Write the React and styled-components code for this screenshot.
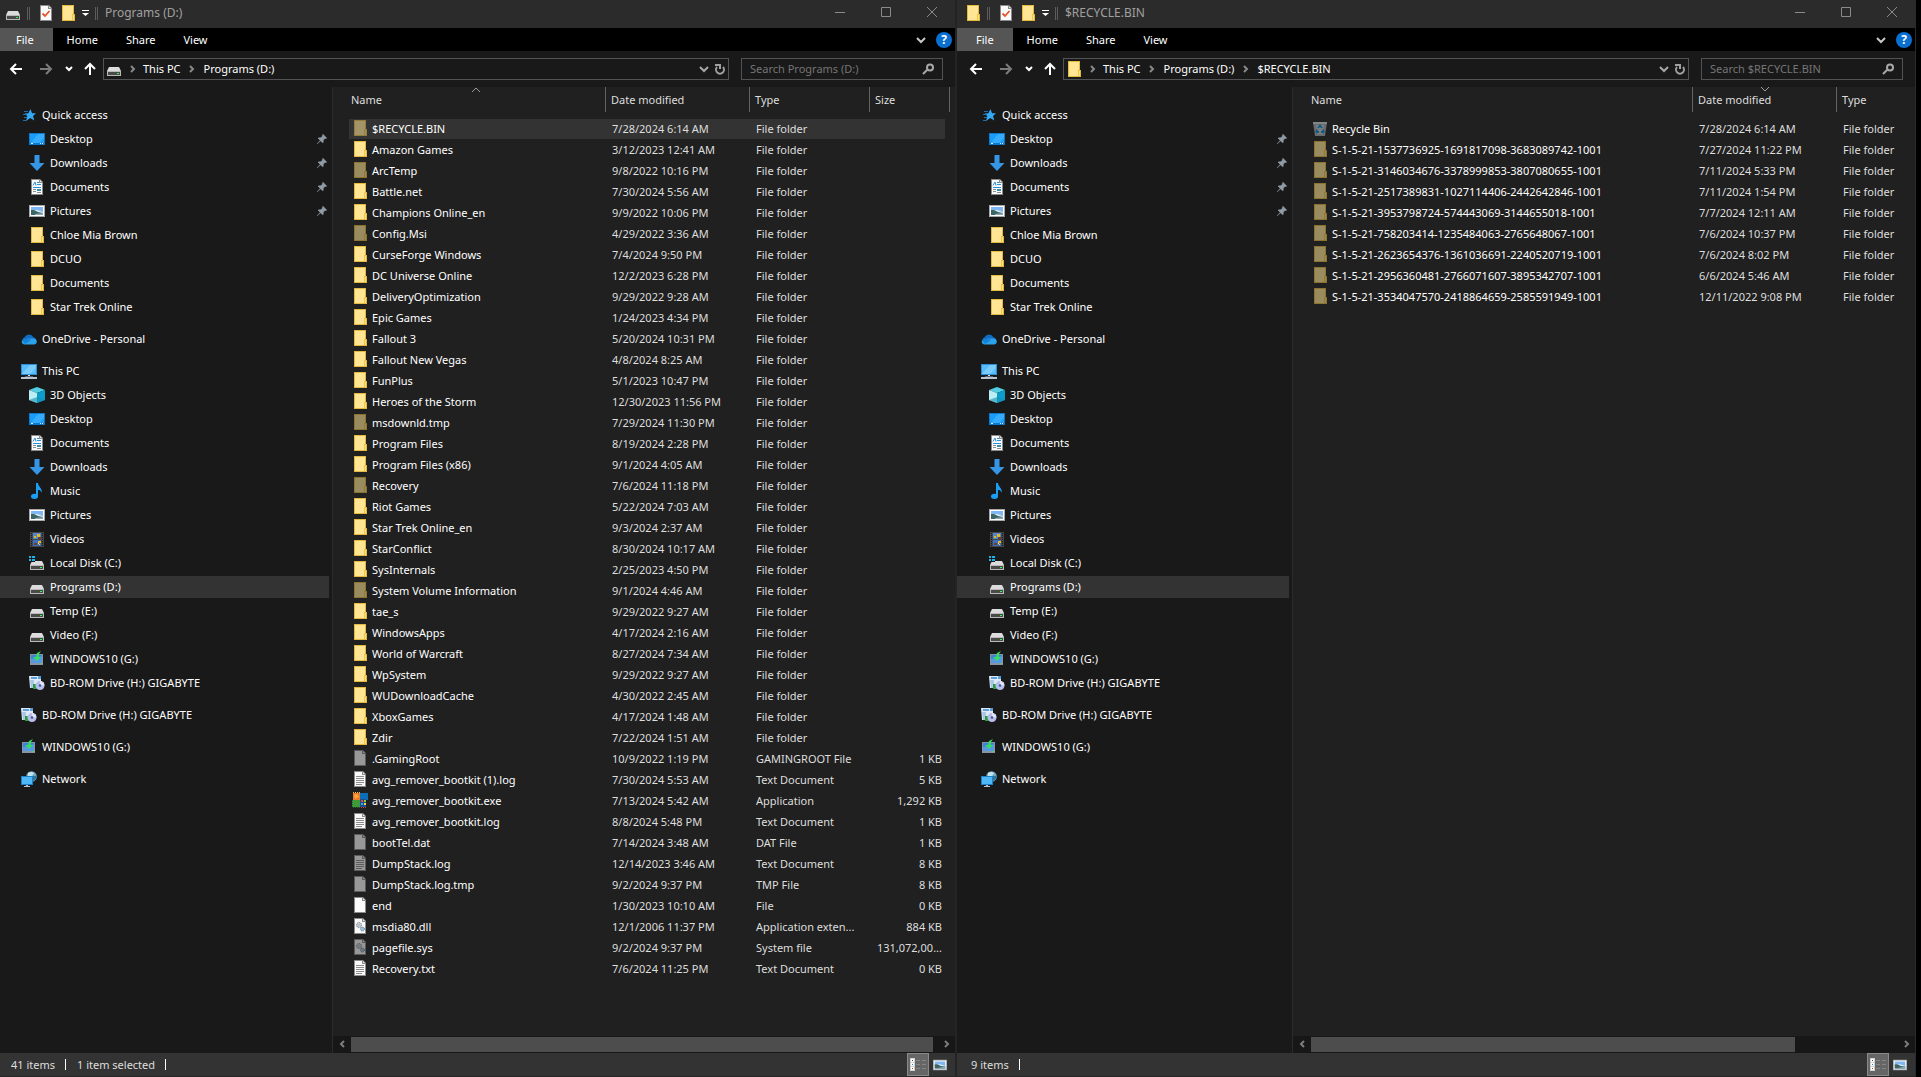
import React from "react";
import styled, { createGlobalStyle, css } from "styled-components";

const GlobalStyle = createGlobalStyle`
  * {
    box-sizing: border-box;
  }
  body {
    margin: 0;
    background: #000;
    color: #fff;
    font-family: "Noto Sans", "Open Sans", sans-serif;
    font-size: 11px;
    line-height: 16px;
    overflow: hidden;
  }
  button, input {
    font: inherit;
    color: inherit;
    border: 0;
    padding: 0;
    background: none;
  }
`;

/* ---------- icons ---------- */

const Svg = styled.svg`
  display: block;
  flex: none;
  opacity: ${props => (props.$dim ? 0.55 : 1)};
`;

const Pic = ({ children, size = 16, dim }) => (
  <Svg width={size} height={size} viewBox="0 0 16 16" $dim={dim} aria-hidden="true">
    {children}
  </Svg>
);

const page = (
  <>
    <path d="M2 0H11L14 3V16H2Z" fill="#8b8b8b" />
    <path d="M3 1H10V4H13V15H3Z" fill="#fafafa" />
    <path d="M11 1V3H13Z" fill="#e2e2e2" />
  </>
);

const drive = (
  <>
    <path d="M3 6H13L15 10H1Z" fill="#dcdcdc" />
    <path d="M1 10H15V15H1Z" fill="#b9b9b9" />
    <path d="M2 11H14V14H2Z" fill="#4a4a4a" />
    <path d="M11 12H13V13H11Z" fill="#2bff3c" />
  </>
);

const picture = (
  <>
    <path d="M0 2H16V14H0Z" fill="#a8a8a8" />
    <path d="M1 3H15V13H1Z" fill="#fff" />
    <path d="M2 4H14V12H2Z" fill="#7fb7f2" />
    <path d="M2 7H8L14 9V10H2Z" fill="#dcecf7" />
    <path d="M2 7L5 7L9 9L14 10V12H2Z" fill="#3d6663" />
    <path d="M6 11L14 10V12H6Z" fill="#86a9b5" />
  </>
);

const gears = (
  <>
    <circle cx="7" cy="7" r="2.6" fill="#c9d2d9" stroke="#777f86" strokeDasharray="1.2 .8" />
    <circle cx="7" cy="7" r="1" fill="#fff" stroke="#8b9298" strokeWidth=".6" />
    <circle cx="10.5" cy="11" r="2" fill="#9dc1da" stroke="#54758d" strokeDasharray="1 .7" />
  </>
);

const shapes = {
  folder: (
    <>
      <path d="M2 0H14V9H15V16H2Z" fill="#e3b93e" />
      <path d="M3 1H13V15H3Z" fill="#ffe594" />
      <path d="M12 10H14V15H12Z" fill="#ffe080" />
      <path d="M12 9H13V15H12Z" fill="#edc650" />
    </>
  ),
  blank: page,
  text: (
    <>
      {page}
      <path d="M4 5.5H12M4 7.5H12M4 9.5H12M4 11.5H12M4 13.5H10" stroke="#8c8c8c" />
    </>
  ),
  dll: (
    <>
      {page}
      {gears}
    </>
  ),
  exe: (
    <>
      <path d="M1 1H8V8H1Z" fill="#ee7a2b" />
      <path d="M8 1H16V8H8Z" fill="#0b6fb8" />
      <path d="M0 8H8V15H0Z" fill="#3f9b3a" />
      <path d="M8 7H14V15H8Z" fill="#1c4e93" />
      <path d="M1 .5H8" stroke="#f3c14a" strokeDasharray="1 1" />
      <path d="M.5 8V16M1 15.5H8" stroke="#1e6f36" strokeDasharray="1 1" />
      <path d="M2 3L5 2L7 5L3 7Z" fill="#f9a83c" />
      <path d="M9 8H11V10H9Z" fill="#e6452c" />
      <path d="M12 8H14V10H12Z" fill="#7ac943" />
      <path d="M9 11H11V13H9Z" fill="#3aa0e8" />
      <path d="M12 11H14V13H12Z" fill="#ffd23a" />
      <path d="M9 15.5H14" stroke="#d1402e" strokeDasharray="1 1" />
    </>
  ),
  bin: (
    <>
      <path d="M1 2H15L13 16H3Z" fill="#a3abaf" />
      <path d="M1 2H15V4H1Z" fill="#d5dadd" />
      <path d="M4 5H12L11 14H5Z" fill="#c3ccd1" />
      <path
        d="M6 8L8 5.500L10 8M5 9.500L4.500 12H7M11 9.500L11.500 12H9"
        fill="none"
        stroke="#0a86d6"
        strokeWidth="1.800"
      />
    </>
  ),
  check: (
    <>
      {page}
      <path d="M4.500 8.500L7 11L11.500 6" fill="none" stroke="#e8532a" strokeWidth="1.800" />
    </>
  ),
  drive,
  windrive: (
    <>
      {drive}
      <path d="M0 0H6V7H0Z" fill="#191919" />
      <path d="M0 1H2V3H0ZM3 1H6V3H3ZM0 4H2V6H0ZM3 4H6V6H3Z" fill="#1cb4e8" />
    </>
  ),
  star: (
    <>
      <path
        d="M9.500 2L11 6.200H15L12 9L13.300 13.500L9.300 11L5 14L6.300 9.300L3.500 6.600L7.400 6.200Z"
        fill="#35a9f5"
      />
      <path d="M3 4.500H7M2 7.500H6M3 10.500H6M2 13.500H5" stroke="#1c6fae" />
    </>
  ),
  desktop: (
    <>
      <path d="M0 2H16V14H0Z" fill="#0b78d0" />
      <path d="M1 3H15V12H1Z" fill="#1a9dfa" />
      <path d="M9 3H15V7L10 12H2Z" fill="#35acff" />
      <path d="M2 12.500H4M11 12.500H12M13 12.500H14" stroke="#d6efff" />
    </>
  ),
  download: <path d="M5.500 0H10.500V8H15.500L8 16L.5 8H5.500Z" fill="#3596e6" />,
  document: (
    <>
      {page}
      <path d="M4 6.500L6 3L7 6.500M8 3.500H10M8 5.500H12M4 8.500H12" fill="none" stroke="#2a8fe0" />
      <path d="M4 10.500H7M4 12.500H7M8 13.500H12" stroke="#8a8a8a" />
      <path d="M8 10H12V12H8Z" fill="#3a8fa5" />
    </>
  ),
  picture,
  cloud: (
    <>
      <path d="M4 13A3.500 3.500 0 0 1 3.500 6.300A5 5 0 0 1 12.500 6.300A3.500 3.500 0 0 1 13 13Z" fill="#0f6cc0" />
      <path d="M3 13.400A3 3 0 0 1 1 9.500L7 7.500L12.500 7.500A3 3 0 0 1 13.500 13.400Z" fill="#2ba2ea" />
      <path d="M1 9.300L7 7L10 9L4 13Z" fill="#1683d8" />
    </>
  ),
  pc: (
    <>
      <path d="M0 1H16V12H0Z" fill="#2d8fd5" />
      <path d="M1 2H15V11H1Z" fill="#57bcfb" />
      <path d="M9 2H15V5L9 11H1Z" fill="#7accff" />
      <path d="M7 12H9V13H7Z" fill="#dfe6ee" />
      <path d="M4 13H12V14H4Z" fill="#55606c" />
      <path d="M0 14H16V16H0Z" fill="#bcc4d4" />
    </>
  ),
  cube: (
    <>
      <path d="M8 0L16 3L8 6L0 3Z" fill="#53cfe3" />
      <path d="M0 3L8 6V16L0 13Z" fill="#bdeef3" />
      <path d="M8 6L16 3V13L8 16Z" fill="#0b9ccb" />
      <path d="M0 13L8 10L16 13L8 16Z" fill="#1590b6" opacity=".6" />
    </>
  ),
  music: (
    <>
      <path d="M7 0H9C9 4 14 5 12.500 10C12 7.500 10.500 7 9 7V13H7Z" fill="#1a9ff5" />
      <ellipse cx="5.500" cy="13.300" rx="3.500" ry="2.600" fill="#1a9ff5" />
    </>
  ),
  video: (
    <>
      <path d="M1 1H15V16H1Z" fill="#474747" />
      <path d="M2.500 2V15M13.500 2V15" stroke="#191919" strokeDasharray="1 1" />
      <path d="M4 2H12V8H4Z" fill="#4c86cf" />
      <path d="M4 9H12V15H4Z" fill="#3a6fc0" />
      <path d="M8 3H11V6H8ZM5 5H7V7H5ZM9 10H12V12H9Z" fill="#e6b32c" />
      <path d="M9 6H12V8H9ZM5 12H8V14H5Z" fill="#6b3f2f" />
      <path d="M9 12L11 14" stroke="#f2d25b" />
    </>
  ),
  usb: (
    <>
      <path d="M1 3H14V14H1Z" fill="#8a93a0" />
      <path d="M2 4H13V12H2Z" fill="#3c83d6" />
      <path d="M2 8L13 5V12H2Z" fill="#5499e2" />
      <path d="M12 12H13V13H12Z" fill="#3dff4f" />
      <path d="M12 0L8 2L7 6H4L8 10L12 6H9.500L10 3Z" fill="#35df5b" />
    </>
  ),
  disc: (
    <>
      <path d="M0 1H10L12 3V13H1Z" fill="#dfe9f4" />
      <path d="M2 2H8V4H2ZM9 1H12V4H9Z" fill="#5b9fdc" />
      <path d="M1 5H5V13H2Z" fill="#a9c8e6" />
      <path d="M4 9H7L8 14H4Z" fill="#2e9b43" />
      <circle cx="11" cy="10.500" r="4.500" fill="#b9bdea" />
      <path d="M11 6A4.500 4.500 0 0 1 15.500 10.500H11Z" fill="#e2e4fb" />
      <circle cx="11" cy="10.500" r="1.300" fill="#3e5f9a" />
    </>
  ),
  network: (
    <>
      <circle cx="10.500" cy="5.500" r="5.300" fill="#6fa9c4" />
      <path d="M7 2Q10 0 13 2L11 5L7 6Z" fill="#c4e2ec" />
      <path d="M12 5L15.500 5Q15 9 12 10Z" fill="#2d7496" />
      <path d="M0 5H12V14H0Z" fill="#1d7fc8" />
      <path d="M1 6H11V13H1Z" fill="#4db8f8" />
      <path d="M5 14H7V15H9V16H3V15H5Z" fill="#b9c2cf" />
    </>
  )
};

const Icon = ({ name, dim }) => <Pic dim={dim}>{shapes[name]}</Pic>;

const Stroke = ({ d, w = 12, h = 12, color = "#fff", width = 1 }) => (
  <Svg width={w} height={h} viewBox={`0 0 ${w} ${h}`} aria-hidden="true">
    <path d={d} fill="none" stroke={color} strokeWidth={width} />
  </Svg>
);

const Pin = () => (
  <Svg width="10" height="10" viewBox="0 0 10 10" aria-hidden="true">
    <path d="M6 0L10 4L9 5L8 4.500L6.500 6.500V8.500L5.500 9L3.500 7L.5 10L0 9.500L3 6.500L1 4.500L1.500 3.500H3.500L5.500 2L5 1Z" fill="#8f9aa3" />
  </Svg>
);

/* ---------- window frame ---------- */

const Desktop = styled.div`
  display: grid;
  grid-template-columns: 957fr 959fr;
  height: 100vh;
  padding-right: 5px;
`;

const Frame = styled.section`
  display: flex;
  flex-direction: column;
  min-width: 0;
  background: #191919;
  border-right: ${props => (props.$front ? "1px solid #2b2b2b" : "2px solid #242424")};
  border-bottom: 1px solid #262626;
`;

const edge = css`
  padding-left: ${props => (props.$front ? 3 : 0)}px;
`;

const TitleBar = styled.header`
  ${edge}
  display: flex;
  align-items: flex-start;
  flex: none;
  height: 28px;
  background: #2b2b2b;
  color: #a0a0a0;
`;

const QuickTools = styled.div`
  display: flex;
  align-items: center;
  height: 26px;
  padding-left: 5px;
`;

const Bars = styled.span`
  width: 3px;
  height: 13px;
  margin: 0 ${props => props.$gap}px 0 6px;
  border: solid #5c5c5c;
  border-width: 0 1px;
`;

const ToolButton = styled.button`
  display: flex;
  margin-right: 6px;
`;

const Title = styled.h1`
  margin: 0;
  flex: 1;
  font-size: 12px;
  line-height: 26px;
  font-weight: 400;
`;

const CaptionButton = styled.button`
  display: flex;
  align-items: center;
  justify-content: center;
  width: 46px;
  height: 24px;
`;

const Ribbon = styled.nav`
  display: flex;
  flex: none;
  height: 23px;
  background: #000;
`;

const Tab = styled.button`
  padding: 0 14px;
  ${props =>
    props.$file &&
    css`
      padding: 0 19px 0 ${props.$front ? 19 : 16}px;
      background: #555;
    `}
`;

const RibbonEnd = styled.div`
  display: flex;
  align-items: center;
  gap: 9px;
  margin-left: auto;
  padding-right: 3px;
`;

const Help = styled.button`
  width: 16px;
  height: 16px;
  border-radius: 50%;
  background: #0a6fd0;
  font-size: 12px;
  font-weight: 700;
`;

const AddressRow = styled.div`
  ${edge}
  display: flex;
  align-items: center;
  flex: none;
  height: 36px;
`;

const Arrows = styled.div`
  display: flex;
  align-items: center;
  width: 103px;
  padding-left: 9px;
`;

const ArrowButton = styled.button`
  display: flex;
  margin-right: ${props => props.$gap}px;
`;

const AddressBox = styled.div`
  display: flex;
  align-items: center;
  flex: 1;
  height: 22px;
  margin-right: 12px;
  padding-left: 2px;
  border: 1px solid #535353;
`;

const Crumb = styled.button`
  padding: 0;
`;

const CrumbArrow = styled.span`
  display: flex;
  justify-content: center;
  width: ${props => (props.$first ? 21 : 23)}px;
`;

const Spacer = styled.span`
  flex: 1;
`;

const BoxButton = styled.button`
  display: flex;
  align-items: center;
  justify-content: center;
  width: ${props => props.$w}px;
  height: 20px;
`;

const SearchBox = styled.label`
  display: flex;
  align-items: center;
  width: 202px;
  height: 22px;
  margin-right: 12px;
  padding: 0 8px;
  border: 1px solid #535353;
`;

const SearchInput = styled.input`
  flex: 1;
  min-width: 0;
  outline: 0;
  &::placeholder {
    color: #757575;
    opacity: 1;
  }
`;

const Body = styled.div`
  display: flex;
  flex: 1;
  min-height: 0;
`;

/* ---------- navigation pane ---------- */

const Tree = styled.nav`
  display: flex;
  flex-direction: column;
  flex: none;
  width: ${props => (props.$front ? 336 : 333)}px;
  padding-top: 16px;
  padding-right: 3px;
  border-right: 1px solid #2b2b2b;
`;

const TreeItem = styled.a`
  display: flex;
  align-items: center;
  gap: 5px;
  flex: none;
  height: 22px;
  margin: ${props => (props.$group ? 9 : 1)}px 0 1px;
  padding-left: ${props => (props.$child ? 29 : 21) + (props.$front ? 3 : 0)}px;
  padding-right: 2px;
  color: #fff;
  text-decoration: none;
  background: ${props => (props.$selected ? "#333" : "none")};
`;

/* ---------- file list ---------- */

const FilePane = styled.main`
  display: flex;
  flex-direction: column;
  flex: 1;
  min-width: 0;
  background: #202020;
`;

const Scroller = styled.div`
  flex: 1;
  min-height: 0;
  overflow: hidden;
  padding-left: 12px;
`;

const Table = styled.table`
  width: ${props => props.$w}px;
  table-layout: fixed;
  border-collapse: separate;
  border-spacing: 0;
`;

const HeadCell = styled.th`
  position: relative;
  height: 25px;
  padding: 0 5px;
  border-left: 1px solid ${props => (props.$first ? "transparent" : "#636363")};
  ${props => props.$last && "border-right: 1px solid #636363;"}
  color: #dedede;
  font-weight: 400;
  text-align: left;
`;

const SortMark = styled.span`
  position: absolute;
  top: 0;
  left: 50%;
  margin-left: -4px;
`;

const HeadGap = styled.tr`
  height: 7px;
`;

const Cell = styled.td`
  height: 21px;
  padding: 0 0 0 7px;
  border-bottom: 1px solid transparent;
  background: ${props => (props.$selected ? "#333" : "none")};
  background-clip: padding-box;
  color: #dedede;
  white-space: nowrap;
`;

const NameCell = styled(Cell)`
  padding-left: 3px;
  border-left: 4px solid transparent;
  color: #fff;
`;

const SizeCell = styled(Cell)`
  padding-right: 3px;
  border-right: 5px solid transparent;
  text-align: right;
`;

const FileName = styled.span`
  display: flex;
  align-items: center;
  gap: 4px;
  & > svg {
    margin-bottom: 2px;
  }
`;

const ScrollBar = styled.div`
  display: flex;
  align-items: center;
  flex: none;
  height: 17px;
  padding-bottom: 1px;
  background: #171717;
`;

const Thumb = styled.div`
  flex: ${props => props.$grow} 1 0;
  height: 15px;
  background: ${props => (props.$track ? "#171717" : "#4d4d4d")};
`;

const StatusBar = styled.footer`
  ${edge}
  display: flex;
  align-items: center;
  flex: none;
  height: 23px;
  background: #333;
  color: #dedede;
`;

const StatusText = styled.span`
  display: flex;
  align-items: center;
  padding-left: 11px;
  &::after {
    content: "";
    width: 1px;
    height: 11px;
    margin-left: 10px;
    background: #fff;
  }
`;

const ViewButton = styled.button`
  display: flex;
  align-items: center;
  justify-content: center;
  width: 22px;
  height: 23px;
  border: 1px solid transparent;
  &:last-child {
    margin-right: 4px;
  }
  ${props =>
    props.$on &&
    css`
      background: #666;
      border-color: #8a8a8a;
    `}
`;

/* ---------- data ---------- */

const places = [
  { label: "Quick access", icon: "star" },
  { label: "Desktop", icon: "desktop", child: true, pin: true },
  { label: "Downloads", icon: "download", child: true, pin: true },
  { label: "Documents", icon: "document", child: true, pin: true },
  { label: "Pictures", icon: "picture", child: true, pin: true },
  { label: "Chloe Mia Brown", icon: "folder", child: true },
  { label: "DCUO", icon: "folder", child: true },
  { label: "Documents", icon: "folder", child: true },
  { label: "Star Trek Online", icon: "folder", child: true },
  { label: "OneDrive - Personal", icon: "cloud", group: true },
  { label: "This PC", icon: "pc", group: true },
  { label: "3D Objects", icon: "cube", child: true },
  { label: "Desktop", icon: "desktop", child: true },
  { label: "Documents", icon: "document", child: true },
  { label: "Downloads", icon: "download", child: true },
  { label: "Music", icon: "music", child: true },
  { label: "Pictures", icon: "picture", child: true },
  { label: "Videos", icon: "video", child: true },
  { label: "Local Disk (C:)", icon: "windrive", child: true },
  { label: "Programs (D:)", icon: "drive", child: true, selected: true },
  { label: "Temp (E:)", icon: "drive", child: true },
  { label: "Video (F:)", icon: "drive", child: true },
  { label: "WINDOWS10 (G:)", icon: "usb", child: true },
  { label: "BD-ROM Drive (H:) GIGABYTE", icon: "disc", child: true },
  { label: "BD-ROM Drive (H:) GIGABYTE", icon: "disc", group: true },
  { label: "WINDOWS10 (G:)", icon: "usb", group: true },
  { label: "Network", icon: "network", group: true }
];

// name, date, type, size, icon, hidden
const folder = (name, date, dim) => [name, date, "File folder", "", "folder", dim];

const programs = [
  folder("$RECYCLE.BIN", "7/28/2024 6:14 AM", true),
  folder("Amazon Games", "3/12/2023 12:41 AM"),
  folder("ArcTemp", "9/8/2022 10:16 PM", true),
  folder("Battle.net", "7/30/2024 5:56 AM"),
  folder("Champions Online_en", "9/9/2022 10:06 PM"),
  folder("Config.Msi", "4/29/2022 3:36 AM", true),
  folder("CurseForge Windows", "7/4/2024 9:50 PM"),
  folder("DC Universe Online", "12/2/2023 6:28 PM"),
  folder("DeliveryOptimization", "9/29/2022 9:28 AM"),
  folder("Epic Games", "1/24/2023 4:34 PM"),
  folder("Fallout 3", "5/20/2024 10:31 PM"),
  folder("Fallout New Vegas", "4/8/2024 8:25 AM"),
  folder("FunPlus", "5/1/2023 10:47 PM"),
  folder("Heroes of the Storm", "12/30/2023 11:56 PM"),
  folder("msdownld.tmp", "7/29/2024 11:30 PM", true),
  folder("Program Files", "8/19/2024 2:28 PM"),
  folder("Program Files (x86)", "9/1/2024 4:05 AM"),
  folder("Recovery", "7/6/2024 11:18 PM", true),
  folder("Riot Games", "5/22/2024 7:03 AM"),
  folder("Star Trek Online_en", "9/3/2024 2:37 AM"),
  folder("StarConflict", "8/30/2024 10:17 AM"),
  folder("SysInternals", "2/25/2023 4:50 PM"),
  folder("System Volume Information", "9/1/2024 4:46 AM", true),
  folder("tae_s", "9/29/2022 9:27 AM"),
  folder("WindowsApps", "4/17/2024 2:16 AM"),
  folder("World of Warcraft", "8/27/2024 7:34 AM"),
  folder("WpSystem", "9/29/2022 9:27 AM"),
  folder("WUDownloadCache", "4/30/2022 2:45 AM"),
  folder("XboxGames", "4/17/2024 1:48 AM"),
  folder("Zdir", "7/22/2024 1:51 AM"),
  [".GamingRoot", "10/9/2022 1:19 PM", "GAMINGROOT File", "1 KB", "blank", true],
  ["avg_remover_bootkit (1).log", "7/30/2024 5:53 AM", "Text Document", "5 KB", "text"],
  ["avg_remover_bootkit.exe", "7/13/2024 5:42 AM", "Application", "1,292 KB", "exe"],
  ["avg_remover_bootkit.log", "8/8/2024 5:48 PM", "Text Document", "1 KB", "text"],
  ["bootTel.dat", "7/14/2024 3:48 AM", "DAT File", "1 KB", "blank", true],
  ["DumpStack.log", "12/14/2023 3:46 AM", "Text Document", "8 KB", "text", true],
  ["DumpStack.log.tmp", "9/2/2024 9:37 PM", "TMP File", "8 KB", "blank", true],
  ["end", "1/30/2023 10:10 AM", "File", "0 KB", "blank"],
  ["msdia80.dll", "12/1/2006 11:37 PM", "Application exten...", "884 KB", "dll"],
  ["pagefile.sys", "9/2/2024 9:37 PM", "System file", "131,072,00...", "dll", true],
  ["Recovery.txt", "7/6/2024 11:25 PM", "Text Document", "0 KB", "text"]
];

const recycled = [
  ["Recycle Bin", "7/28/2024 6:14 AM", "File folder", "", "bin", true],
  folder("S-1-5-21-1537736925-1691817098-3683089742-1001", "7/27/2024 11:22 PM", true),
  folder("S-1-5-21-3146034676-3378999853-3807080655-1001", "7/11/2024 5:33 PM", true),
  folder("S-1-5-21-2517389831-1027114406-2442642846-1001", "7/11/2024 1:54 PM", true),
  folder("S-1-5-21-3953798724-574443069-3144655018-1001", "7/7/2024 12:11 AM", true),
  folder("S-1-5-21-758203414-1235484063-2765648067-1001", "7/6/2024 10:37 PM", true),
  folder("S-1-5-21-2623654376-1361036691-2240520719-1001", "7/6/2024 8:02 PM", true),
  folder("S-1-5-21-2956360481-2766071607-3895342707-1001", "6/6/2024 5:46 AM", true),
  folder("S-1-5-21-3534047570-2418864659-2585591949-1001", "12/11/2022 9:08 PM", true)
];

/* ---------- parts ---------- */

const TitleArea = ({ title, icon, front }) => (
  <TitleBar $front={front}>
    <QuickTools>
      <Icon name={icon} />
      <Bars $gap={8} />
      <ToolButton aria-label="Properties">
        <Icon name="check" />
      </ToolButton>
      <ToolButton aria-label="New folder">
        <Icon name="folder" />
      </ToolButton>
      <button aria-label="Customize Quick Access Toolbar">
        <Svg width="7" height="6" viewBox="0 0 7 6">
          <path d="M0 0H7V1H0ZM0 3H7L3.500 6Z" fill="#fff" />
        </Svg>
      </button>
      <Bars $gap={7} />
    </QuickTools>
    <Title>{title}</Title>
    <CaptionButton aria-label="Minimize">
      <Stroke d="M1 6.500H11" color="#8a8a8a" />
    </CaptionButton>
    <CaptionButton aria-label="Maximize">
      <Stroke d="M1.500 1.500H10.500V10.500H1.500Z" color="#8a8a8a" />
    </CaptionButton>
    <CaptionButton aria-label="Close">
      <Stroke d="M1 1L11 11M11 1L1 11" color="#8a8a8a" />
    </CaptionButton>
  </TitleBar>
);

const RibbonTabs = ({ front }) => (
  <Ribbon>
    <Tab $file $front={front}>
      File
    </Tab>
    <Tab>Home</Tab>
    <Tab>Share</Tab>
    <Tab>View</Tab>
    <RibbonEnd>
      <button aria-label="Expand the Ribbon">
        <Stroke d="M2 4L6 8L10 4" color="#c8c8c8" width={2} />
      </button>
      <Help aria-label="Help">?</Help>
    </RibbonEnd>
  </Ribbon>
);

const Address = ({ icon, crumbs, search, front }) => (
  <AddressRow $front={front}>
    <Arrows>
      <ArrowButton $gap={16} aria-label="Back">
        <Stroke d="M7 2L2 7L7 12M2 7H13" w={14} h={14} width={2} />
      </ArrowButton>
      <ArrowButton $gap={12} aria-label="Forward">
        <Stroke d="M7 2L12 7L7 12M1 7H12" w={14} h={14} width={2} color="#7c7c7c" />
      </ArrowButton>
      <ArrowButton $gap={10} aria-label="Recent locations">
        <Stroke d="M1 3L4 6L7 3" w={8} h={10} width={2} />
      </ArrowButton>
      <ArrowButton $gap={0} aria-label="Up">
        <Stroke d="M2 7L7 2L12 7M7 2V13" w={14} h={14} width={2} />
      </ArrowButton>
    </Arrows>
    <AddressBox>
      <Icon name={icon} />
      {crumbs.map((crumb, index) => (
        <React.Fragment key={crumb}>
          <CrumbArrow $first={index === 0}>
            <Stroke d="M1 1L4 4L1 7" w={6} h={8} color="#8a8a8a" width={2} />
          </CrumbArrow>
          <Crumb>{crumb}</Crumb>
        </React.Fragment>
      ))}
      <Spacer />
      <BoxButton $w={16} aria-label="Previous locations">
        <Stroke d="M1 4L5 8L9 4" w={10} color="#a8a8a8" width={2} />
      </BoxButton>
      <BoxButton $w={16} aria-label="Refresh">
        <Stroke d="M3 4A4 4 0 1 0 9 4M1 2H6V6" w={12} color="#a0a0a0" width={2} />
      </BoxButton>
    </AddressBox>
    <SearchBox>
      <SearchInput type="search" aria-label={search} placeholder={search} />
      <Stroke d="M1 11L5 7M5 4.500A3 3 0 1 1 11 4.500A3 3 0 1 1 5 4.500" color="#a8a8a8" width={2} />
    </SearchBox>
  </AddressRow>
);

const Places = ({ front }) => (
  <Tree $front={front}>
    {places.map((place, index) => (
      <TreeItem
        key={index}
        href="#"
        $child={place.child}
        $group={place.group}
        $selected={place.selected}
        $front={front}
      >
        <Icon name={place.icon} />
        {place.label}
        {place.pin && (
          <>
            <Spacer />
            <Pin />
          </>
        )}
      </TreeItem>
    ))}
  </Tree>
);

const FileTable = ({ columns, files, sort, selected }) => {
  const withSize = columns.length > 3;
  return (
    <Table $w={columns.reduce((sum, col) => sum + col.width, 0)}>
      <colgroup>
        {columns.map(col => (
          <col key={col.label} width={col.width} />
        ))}
      </colgroup>
      <thead>
        <tr>
          {columns.map((col, index) => (
            <HeadCell key={col.label} $first={index === 0} $last={col.label === "Size"}>
              {col.label}
              {sort.column === col.label && (
                <SortMark>
                  <Stroke d={sort.up ? "M0 5L4 1L8 5" : "M0 0L4 4L8 0"} w={8} h={5} color="#9a9a9a" />
                </SortMark>
              )}
            </HeadCell>
          ))}
        </tr>
        <HeadGap />
      </thead>
      <tbody>
        {files.map(([name, date, type, size, icon, dim]) => (
          <tr key={name}>
            <NameCell $selected={selected === name}>
              <FileName>
                <Icon name={icon} dim={dim} />
                {name}
              </FileName>
            </NameCell>
            <Cell $selected={selected === name}>{date}</Cell>
            <Cell $selected={selected === name}>{type}</Cell>
            {withSize && <SizeCell $selected={selected === name}>{size}</SizeCell>}
          </tr>
        ))}
      </tbody>
    </Table>
  );
};

const Explorer = ({ title, icon, crumbs, front, columns, files, sort, selected, thumb, status }) => (
  <Frame $front={front}>
    <TitleArea title={title} icon={icon} front={front} />
    <RibbonTabs front={front} />
    <Address icon={icon} crumbs={crumbs} search={`Search ${title}`} front={front} />
    <Body>
      <Places front={front} />
      <FilePane>
        <Scroller>
          <FileTable columns={columns} files={files} sort={sort} selected={selected} />
        </Scroller>
        <ScrollBar>
          <BoxButton $w={18} aria-label="Scroll left">
            <Stroke d="M6 1L3 4L6 7" w={8} h={8} color="#7d7d7d" width={2} />
          </BoxButton>
          <Thumb $grow={thumb} />
          <Thumb $grow={587 - thumb} $track />
          <BoxButton $w={17} aria-label="Scroll right">
            <Stroke d="M2 1L5 4L2 7" w={8} h={8} color="#7d7d7d" width={2} />
          </BoxButton>
        </ScrollBar>
      </FilePane>
    </Body>
    <StatusBar $front={front}>
      {status.map(text => (
        <StatusText key={text}>{text}</StatusText>
      ))}
      <Spacer />
      <ViewButton $on aria-label="Details view">
        <Svg width="16" height="13" viewBox="0 0 16 13">
          <path d="M0 0H5V13H0Z" fill="#d0d0d0" />
          <path d="M1 1H4V4H1ZM1 5H4V8H1ZM1 9H4V12H1Z" fill="#fff" />
          <path d="M2 2H3V3H2Z" fill="#444" />
          <path d="M2 6H3V7H2Z" fill="#2a7fd0" />
          <path d="M2 10H3V11H2Z" fill="#c8401f" />
          <path d="M6 2.500H10M12 2.500H16M6 6.500H10M12 6.500H16M6 10.500H10M12 10.500H16" stroke="#858585" />
        </Svg>
      </ViewButton>
      <ViewButton aria-label="Large thumbnails view">
        <Pic size={14}>{picture}</Pic>
      </ViewButton>
    </StatusBar>
  </Frame>
);

const App = () => {
  return (
    <>
      <GlobalStyle />
      <Desktop>
        <Explorer
          title="Programs (D:)"
          icon="drive"
          crumbs={["This PC", "Programs (D:)"]}
          columns={[
            { label: "Name", width: 260 },
            { label: "Date modified", width: 144 },
            { label: "Type", width: 120 },
            { label: "Size", width: 81 }
          ]}
          files={programs}
          sort={{ column: "Name", up: true }}
          selected="$RECYCLE.BIN"
          thumb={582}
          status={["41 items", "1 item selected"]}
        />
        <Explorer
          front
          title="$RECYCLE.BIN"
          icon="folder"
          crumbs={["This PC", "Programs (D:)", "$RECYCLE.BIN"]}
          columns={[
            { label: "Name", width: 387 },
            { label: "Date modified", width: 144 },
            { label: "Type", width: 120 }
          ]}
          files={recycled}
          sort={{ column: "Date modified", up: false }}
          thumb={484}
          status={["9 items"]}
        />
      </Desktop>
    </>
  );
};

export default App;
